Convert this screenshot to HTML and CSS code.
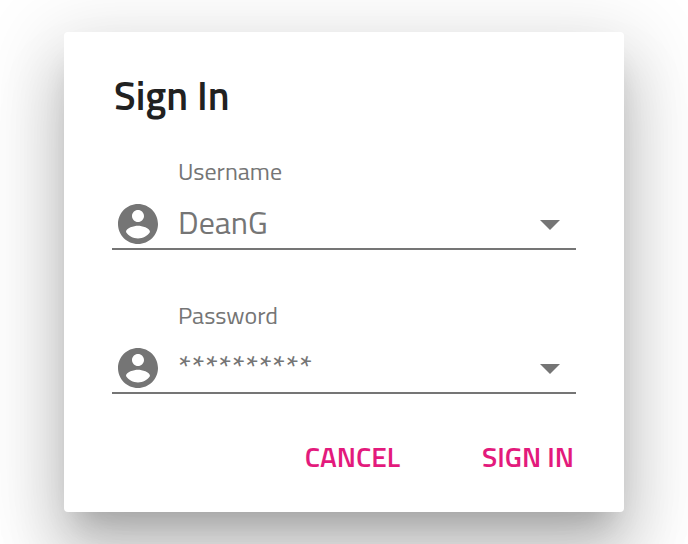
FILE: index.html
```html
<!DOCTYPE html>
<html lang="en">
<head>
<meta charset="utf-8">
<meta name="viewport" content="width=device-width, initial-scale=1">
<title>Sign In</title>
<link rel="stylesheet" href="styles.css">
</head>
<body>
<form class="dialog">
  <h1 class="title">Sign In</h1>
  <div class="field">
    <label class="label" for="username">Username</label>
    <div class="control">
      <svg class="avatar" viewBox="2 2 20 20" aria-hidden="true"><path d="M12 2C6.48 2 2 6.48 2 12s4.48 10 10 10 10-4.48 10-10S17.52 2 12 2zm0 3c1.66 0 3 1.34 3 3s-1.34 3-3 3-3-1.340-3-3 1.340-3 3-3zm0 14.200c-2.500 0-4.710-1.280-6-3.220.03-1.990 4-3.080 6-3.080 1.990 0 5.970 1.090 6 3.080-1.290 1.940-3.500 3.220-6 3.220z"/></svg>
      <input class="input" id="username" type="text" value="DeanG">
      <svg class="arrow" viewBox="0 0 20 10" aria-hidden="true"><path d="M0 0h20L10 10z"/></svg>
    </div>
  </div>
  <div class="field">
    <label class="label" for="password">Password</label>
    <div class="control">
      <svg class="avatar" viewBox="2 2 20 20" aria-hidden="true"><path d="M12 2C6.48 2 2 6.48 2 12s4.48 10 10 10 10-4.48 10-10S17.52 2 12 2zm0 3c1.66 0 3 1.34 3 3s-1.34 3-3 3-3-1.340-3-3 1.340-3 3-3zm0 14.200c-2.500 0-4.710-1.280-6-3.220.03-1.990 4-3.080 6-3.080 1.990 0 5.970 1.090 6 3.080-1.290 1.940-3.500 3.220-6 3.220z"/></svg>
      <input class="input" id="password" type="text" value="**********">
      <svg class="arrow" viewBox="0 0 20 10" aria-hidden="true"><path d="M0 0h20L10 10z"/></svg>
    </div>
  </div>
  <div class="actions">
    <button class="button" type="button">CANCEL</button>
    <button class="button" type="submit">SIGN IN</button>
  </div>
</form>
</body>
</html>
```
FILE: styles.css
```css
* {
  box-sizing: border-box;
}

body {
  margin: 0;
  padding: 32px 64px;
  background: #fff;
  font-family: "Titillium Web", "Noto Sans", sans-serif;
  color: #757575;
  -webkit-font-smoothing: antialiased;
}

.dialog {
  padding: 40px 48px 38px;
  border-radius: 4px;
  background: #fff;
  box-shadow: 0 22px 30px -14px rgba(0, 0, 0, 0.2),
    0 48px 64px 6px rgba(0, 0, 0, 0.14),
    0 18px 76px 16px rgba(0, 0, 0, 0.12);
}

.title {
  margin: 0 2px 32px;
  font-size: 40px;
  font-weight: 600;
  line-height: 48px;
  color: #212121;
}

.field {
  padding-bottom: 4px;
  margin-bottom: 46px;
  border-bottom: 2px solid #757575;
}

.label {
  display: block;
  padding-left: 66px;
  font-size: 24px;
  line-height: 38px;
}

.control {
  display: flex;
  align-items: center;
  padding: 0 16px 0 6px;
}

.avatar {
  flex: none;
  width: 40px;
  height: 40px;
  margin: 14px 20px 0 0;
  fill: #757575;
}

.input {
  flex: 1;
  min-width: 0;
  height: 54px;
  padding: 10px 0 0;
  border: 0;
  outline: 0;
  background: none;
  font: inherit;
  font-size: 32px;
  color: inherit;
}

.arrow {
  flex: none;
  width: 20px;
  height: 10px;
  margin-top: 16px;
  fill: #757575;
}

.actions {
  display: flex;
  justify-content: flex-end;
  gap: 82px;
  padding-right: 2px;
}

.button {
  padding: 0;
  border: 0;
  background: none;
  font: inherit;
  font-size: 28px;
  font-weight: 600;
  line-height: 34px;
  color: #e31a7c;
}
```
